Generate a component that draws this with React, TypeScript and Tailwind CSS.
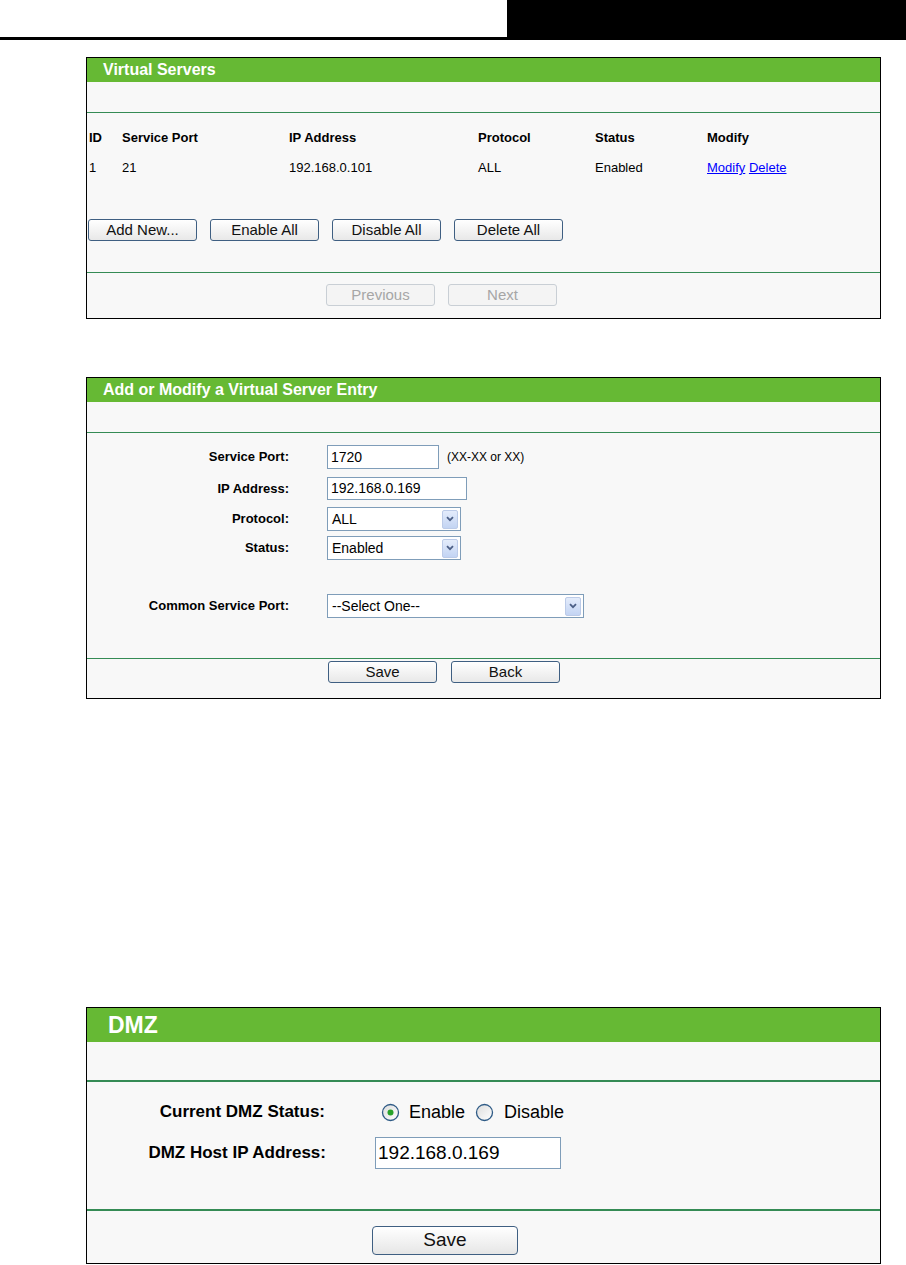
import type { ReactNode } from 'react'

const FONT = "font-['Liberation_Sans',Arial,sans-serif]"

function Panel({
  title,
  big = false,
  children,
  className = '',
}: {
  title: string
  big?: boolean
  children: ReactNode
  className?: string
}) {
  return (
    <div className={`ml-[86px] w-[795px] border border-black bg-[#f8f8f8] ${className}`}>
      {big ? (
        <div className="h-[34px] bg-[#66b934] pl-[21px] text-[23px] font-bold leading-[34px] text-white">{title}</div>
      ) : (
        <div className="h-[24px] bg-[#66b934] pl-[16px] text-[16px] font-bold leading-[24px] text-white">{title}</div>
      )}
      {big ? (
        <div className="h-[40px] border-b-2 border-[#358b55]" />
      ) : (
        <div className="h-[31px] border-b border-[#358b55]" />
      )}
      {children}
    </div>
  )
}

function Btn({ children, disabled = false, big = false }: { children: ReactNode; disabled?: boolean; big?: boolean }) {
  return (
    <button
      type="button"
      className={
        big
          ? 'flex h-[29px] w-[146px] items-center justify-center rounded-[4px] border border-[#3f5f82] bg-gradient-to-b from-white to-[#e6e6e6] text-[19px] text-[#111]'
          : disabled
            ? 'flex h-[22px] w-[109px] items-center justify-center rounded-[3px] border border-[#c9cfd5] bg-[#f4f4f4] text-[15px] text-[#a6a6a6]'
            : 'flex h-[22px] w-[109px] items-center justify-center rounded-[3px] border border-[#3f5f82] bg-gradient-to-b from-white to-[#e8e8e8] text-[15px] text-[#111]'
      }
    >
      {children}
    </button>
  )
}

function TextBox({ value, w, h = 'h-[24px]' }: { value: string; w: string; h?: string }) {
  return (
    <div className={`flex items-center border border-[#7f9db9] bg-white pl-[3px] text-[14px] text-black ${w} ${h}`}>{value}</div>
  )
}

function Select({ value, w }: { value: string; w: string }) {
  return (
    <div className={`flex h-[24px] items-center justify-between border border-[#7f9db9] bg-white pl-[4px] pr-[2px] text-[14px] text-black ${w}`}>
      <span>{value}</span>
      <span className="flex h-[19px] w-[16px] items-center justify-center rounded-[2px] border border-[#bccbe8] bg-gradient-to-b from-[#e4ecfb] to-[#c3d4f3]">
        <svg width="8" height="6" viewBox="0 0 8 6">
          <path d="M1 1.2 L4 4.2 L7 1.2" fill="none" stroke="#4c5f86" strokeWidth="1.8" />
        </svg>
      </span>
    </div>
  )
}

function Radio({ checked }: { checked?: boolean }) {
  return (
    <svg width="19" height="19" viewBox="0 0 19 19">
      <defs>
        <linearGradient id="rg" x1="0" y1="0" x2="1" y2="1">
          <stop offset="0" stopColor="#dcdcdc" />
          <stop offset="1" stopColor="#ffffff" />
        </linearGradient>
      </defs>
      <circle cx="9.5" cy="9.5" r="8" fill="url(#rg)" stroke="#2f5b86" strokeWidth="1.3" />
      {checked && <circle cx="9.5" cy="9.5" r="3" fill="#27a22a" />}
    </svg>
  )
}

const COLS = 'grid grid-cols-[33px_167px_189px_117px_112px_1fr] items-center pl-[2px]'

export default function App() {
  return (
    <div className={`h-[1265px] w-[906px] overflow-hidden bg-white text-black ${FONT}`}>
      {/* page header */}
      <div className="flex h-[40px]">
        <div className="flex-1 border-b-[3px] border-black" />
        <div className="w-[399px] bg-black" />
      </div>

      {/* Virtual Servers list */}
      <Panel title="Virtual Servers" className="mt-[17px]">
        <div className="pt-[10px]">
          <div className={`${COLS} h-[30px] text-[13px] font-bold`}>
            <span>ID</span>
            <span>Service Port</span>
            <span>IP Address</span>
            <span>Protocol</span>
            <span>Status</span>
            <span>Modify</span>
          </div>
          <div className={`${COLS} h-[30px] text-[13px]`}>
            <span>1</span>
            <span>21</span>
            <span>192.168.0.101</span>
            <span>ALL</span>
            <span>Enabled</span>
            <span className="text-[#0000ff]">
              <span className="underline">Modify</span> <span className="underline">Delete</span>
            </span>
          </div>
        </div>
        <div className="mt-[36px] flex gap-[13px] pb-[31px] pl-[1px]">
          <Btn>Add New...</Btn>
          <Btn>Enable All</Btn>
          <Btn>Disable All</Btn>
          <Btn>Delete All</Btn>
        </div>
        <div className="flex gap-[13px] border-t border-[#358b55] pb-[12px] pl-[239px] pt-[11px]">
          <Btn disabled>Previous</Btn>
          <Btn disabled>Next</Btn>
        </div>
      </Panel>

      {/* Add or Modify entry */}
      <Panel title="Add or Modify a Virtual Server Entry" className="mt-[58px]">
        <div className="flex flex-col pb-[40px] pt-[12px] text-[13px]">
          <div className="flex items-center">
            <span className="w-[202px] text-right font-bold">Service Port:</span>
            <div className="ml-[38px] flex items-center">
              <TextBox value="1720" w="w-[112px]" />
              <span className="ml-[8px] text-[12px]">(XX-XX or XX)</span>
            </div>
          </div>
          <div className="mt-[8px] flex items-center">
            <span className="w-[202px] text-right font-bold">IP Address:</span>
            <div className="ml-[38px]">
              <TextBox value="192.168.0.169" w="w-[140px]" h="h-[23px]" />
            </div>
          </div>
          <div className="mt-[7px] flex items-center">
            <span className="w-[202px] text-right font-bold">Protocol:</span>
            <div className="ml-[38px]">
              <Select value="ALL" w="w-[134px]" />
            </div>
          </div>
          <div className="mt-[5px] flex items-center">
            <span className="w-[202px] text-right font-bold">Status:</span>
            <div className="ml-[38px]">
              <Select value="Enabled" w="w-[134px]" />
            </div>
          </div>
          <div className="mt-[34px] flex items-center">
            <span className="w-[202px] text-right font-bold">Common Service Port:</span>
            <div className="ml-[38px]">
              <Select value="--Select One--" w="w-[257px]" />
            </div>
          </div>
        </div>
        <div className="flex gap-[14px] border-t border-[#358b55] pb-[15px] pl-[241px] pt-[2px]">
          <Btn>Save</Btn>
          <Btn>Back</Btn>
        </div>
      </Panel>

      {/* DMZ */}
      <Panel title="DMZ" big className="mt-[308px]">
        <div className="flex flex-col pb-[40px] pt-[19px] text-[17px]">
          <div className="flex h-[22px] items-center">
            <span className="w-[238px] text-right font-bold">Current DMZ Status:</span>
            <div className="ml-[50px] flex items-center text-[18px]">
              <span className="ml-[6px] flex">
                <Radio checked />
              </span>
              <span className="ml-[9px]">Enable</span>
              <span className="ml-[10px] flex">
                <Radio />
              </span>
              <span className="ml-[10px]">Disable</span>
            </div>
          </div>
          <div className="mt-[14px] flex items-center">
            <span className="w-[239px] text-right font-bold">DMZ Host IP Address:</span>
            <div className="ml-[49px] flex h-[32px] w-[186px] items-center border border-[#7f9db9] bg-white pl-[2px] text-[19px]">
              192.168.0.169
            </div>
          </div>
        </div>
        <div className="border-t-2 border-[#358b55] pb-[8px] pl-[285px] pt-[15px]">
          <Btn big>Save</Btn>
        </div>
      </Panel>
    </div>
  )
}
